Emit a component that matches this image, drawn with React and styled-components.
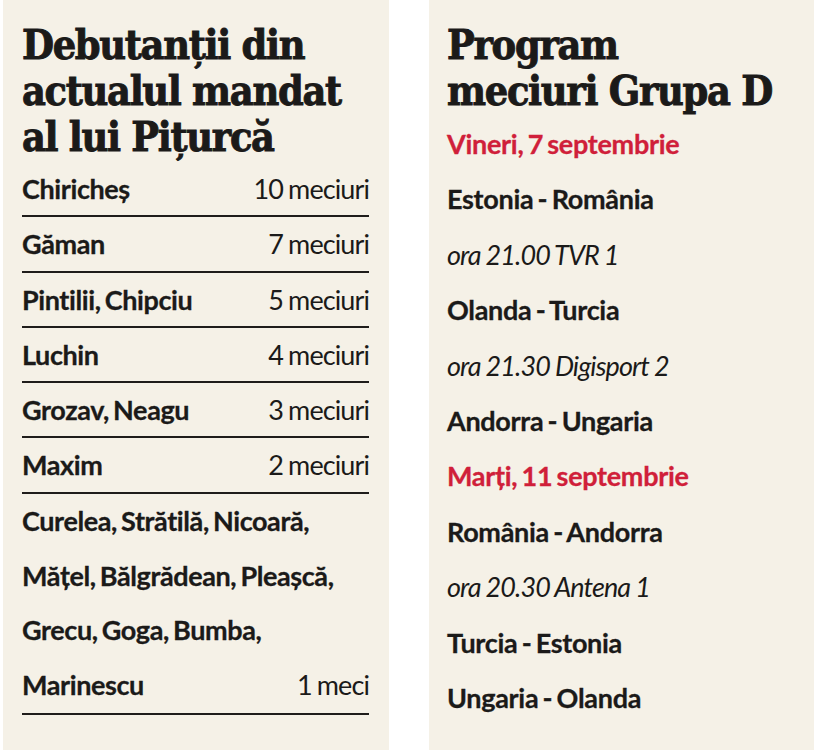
import styled, { createGlobalStyle } from "styled-components";

const GlobalStyle = createGlobalStyle`
  body {
    margin: 0;
    background: #ffffff;
  }
`;

const Page = styled.div`
  display: flex;
  gap: 40px;
  height: 750px;
  padding-left: 3px;
  background: #ffffff;
`;

const Panel = styled.section`
  flex: ${(p) => (p.$grow ? "1" : "0 0 " + p.$width + "px")};
  min-width: 0;
  background: #f5f1e7;
  padding: 22px ${(p) => p.$padRight}px 0 ${(p) => p.$padLeft}px;
  box-sizing: border-box;
  color: #1b1a19;
`;

const Title = styled.h2`
  margin: 0 0 2px;
  font-family: "DejaVu Serif", "Liberation Serif", serif;
  font-stretch: condensed;
  font-weight: 700;
  font-size: 41px;
  line-height: 46px;
  letter-spacing: -1.3px;
  -webkit-text-stroke: 0.9px #1b1a19;
  color: #1b1a19;
`;

const StatList = styled.div`
  display: flex;
  flex-direction: column;
`;

const StatRow = styled.div`
  display: flex;
  justify-content: space-between;
  align-items: flex-end;
  border-bottom: 2px solid #1f1d1b;
  font-family: Lato, "Liberation Sans", sans-serif;
  font-size: 27px;
  line-height: ${(p) => (p.$multi ? "54.8px" : "53.3px")};
  letter-spacing: -0.4px;
  word-spacing: -2px;
  white-space: nowrap;
`;

const Name = styled.span`
  flex: 1;
  min-width: 0;
  font-weight: 700;
  -webkit-text-stroke: 0.3px #1b1a19;
`;

const Count = styled.span`
  flex-shrink: 0;
  font-weight: 400;
  letter-spacing: -0.9px;
  word-spacing: -1px;
`;

const Schedule = styled.div`
  display: flex;
  flex-direction: column;
`;

const Line = styled.div`
  font-family: Lato, "Liberation Sans", sans-serif;
  font-size: 27px;
  line-height: 55.4px;
  letter-spacing: ${(p) => (p.$kind === "time" ? "-0.9px" : "-0.3px")};
  word-spacing: ${(p) => (p.$kind === "time" ? "-0.5px" : "-2px")};
  font-weight: ${(p) => (p.$kind === "time" ? 400 : 700)};
  font-style: ${(p) => (p.$kind === "time" ? "italic" : "normal")};
  color: ${(p) => (p.$kind === "day" ? "#d01f3a" : "#1b1a19")};
  -webkit-text-stroke: ${(p) => (p.$kind === "time" ? "0" : "0.3px")} currentColor;
  white-space: nowrap;
`;

const debutants = [
  { name: "Chiricheș", count: "10 meciuri" },
  { name: "Găman", count: "7 meciuri" },
  { name: "Pintilii, Chipciu", count: "5 meciuri" },
  { name: "Luchin", count: "4 meciuri" },
  { name: "Grozav, Neagu", count: "3 meciuri" },
  { name: "Maxim", count: "2 meciuri" },
  {
    name: [
      "Curelea, Strătilă, Nicoară,",
      "Mățel, Bălgrădean, Pleașcă,",
      "Grecu, Goga, Bumba,",
      "Marinescu",
    ],
    count: "1 meci",
  },
];

const program = [
  { kind: "day", text: "Vineri, 7 septembrie" },
  { kind: "match", text: "Estonia - România" },
  { kind: "time", text: "ora 21.00 TVR 1" },
  { kind: "match", text: "Olanda - Turcia" },
  { kind: "time", text: "ora 21.30 Digisport 2" },
  { kind: "match", text: "Andorra - Ungaria" },
  { kind: "day", text: "Marți, 11 septembrie" },
  { kind: "match", text: "România - Andorra" },
  { kind: "time", text: "ora 20.30 Antena 1" },
  { kind: "match", text: "Turcia - Estonia" },
  { kind: "match", text: "Ungaria - Olanda" },
];

export default function App() {
  return (
    <>
      <GlobalStyle />
      <Page>
        <Panel $width={386} $padLeft={19} $padRight={20}>
          <Title>
            Debutanții din
            <br />
            actualul mandat
            <br />
            al lui Pițurcă
          </Title>
          <StatList>
            {debutants.map((d, i) => (
              <StatRow key={i} $multi={Array.isArray(d.name)}>
                <Name>
                  {Array.isArray(d.name)
                    ? d.name.map((part, j) => (
                        <span key={j}>
                          {part}
                          {j < d.name.length - 1 && <br />}
                        </span>
                      ))
                    : d.name}
                </Name>
                <Count>{d.count}</Count>
              </StatRow>
            ))}
          </StatList>
        </Panel>
        <Panel $grow $padLeft={18} $padRight={18}>
          <Title>
            Program
            <br />
            meciuri Grupa D
          </Title>
          <Schedule>
            {program.map((item, i) => (
              <Line key={i} $kind={item.kind}>
                {item.text}
              </Line>
            ))}
          </Schedule>
        </Panel>
      </Page>
    </>
  );
}
